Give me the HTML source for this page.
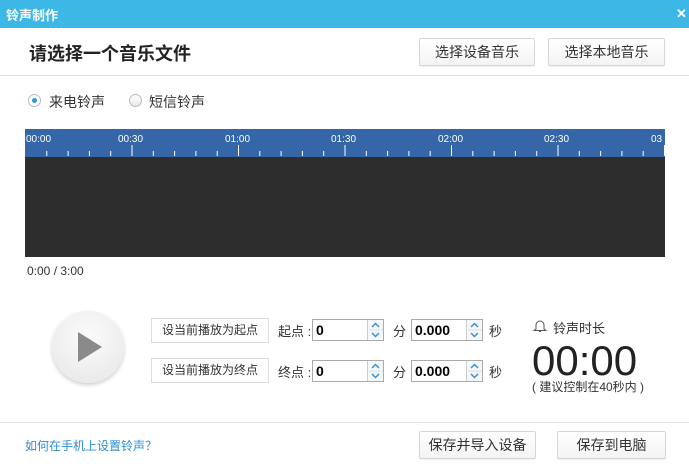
<!DOCTYPE html>
<html><head><meta charset="utf-8"><style>
*{margin:0;padding:0;box-sizing:border-box}
body{width:689px;height:466px;background:#fff;font-family:"Liberation Sans","Noto Sans CJK SC",sans-serif;position:relative;overflow:hidden;color:#333}
.a{position:absolute}
.btn{position:absolute;border:1px solid #d6d6d6;border-radius:2px;background:linear-gradient(#fff,#f4f4f4);font-size:14px;color:#333;text-align:center;box-shadow:0 1px 1px rgba(0,0,0,.06)}
.sb{position:absolute;border:1px solid #ddd;background:#fff;font-size:12px;text-align:center;line-height:22px;color:#333}
.inp{position:absolute;border:1px solid #aaa;background:#fff;font-size:14px;font-weight:bold;color:#000;padding-left:3px;line-height:20px;font-family:"Liberation Sans Narrow","Liberation Sans",sans-serif}
.sp{position:absolute;width:16px;height:20px;border-left:1px solid #ccc;right:0;top:0;background:#f4f8fb}
.lbl{position:absolute;font-size:13px;color:#333}
</style></head><body>
<div class="a" style="left:0;top:0;width:689px;height:28px;background:#3db8e6"></div>
<div class="a" style="left:6px;top:5px;font-size:13px;color:#fff;font-weight:bold">铃声制作</div>
<div class="a" style="left:676px;top:6px;font-size:13px;color:#fff;font-weight:bold">✕</div>
<div class="a" style="left:29px;top:40px;font-size:18px;color:#222;font-weight:bold">请选择一个音乐文件</div>
<div class="btn" style="left:419px;top:38px;width:116px;height:28px;line-height:26px">选择设备音乐</div>
<div class="btn" style="left:548px;top:38px;width:117px;height:28px;line-height:26px">选择本地音乐</div>
<div class="a" style="left:0;top:75px;width:689px;height:1px;background:#e3e3e3"></div>
<div class="a" style="left:28px;top:94px;width:13px;height:13px;border-radius:50%;border:1px solid #bbb;background:#fff"><div class="a" style="left:3px;top:3px;width:5px;height:5px;border-radius:50%;background:#2a9be0"></div></div>
<div class="a" style="left:49px;top:92px;font-size:14px">来电铃声</div>
<div class="a" style="left:129px;top:94px;width:13px;height:13px;border-radius:50%;border:1px solid #bbb;background:linear-gradient(#fff,#e8e8e8)"></div>
<div class="a" style="left:149px;top:92px;font-size:14px">短信铃声</div>
<div class="a" style="left:25px;top:129px;width:640px;height:28px;background:#3566a8;overflow:hidden">
<svg width="640" height="28" style="position:absolute;left:0;top:0">
<g fill="#fff" font-size="10" font-family="Liberation Sans Narrow,Liberation Sans,sans-serif">
<text x="1" y="13">00:00</text><text x="93" y="13">00:30</text><text x="200" y="13">01:00</text><text x="306" y="13">01:30</text><text x="413" y="13">02:00</text><text x="519" y="13">02:30</text><text x="626" y="13">03</text></g>
<g stroke="#fff" stroke-width="1">
<path d="M21.8 22v5M43.1 22v5M64.4 22v5M85.7 22v5M107 16v11M128.3 22v5M149.6 22v5M170.9 22v5M192.2 22v5M213.5 16v11M234.8 22v5M256.1 22v5M277.4 22v5M298.7 22v5M320 16v11M341.3 22v5M362.6 22v5M383.9 22v5M405.2 22v5M426.5 16v11M447.8 22v5M469.1 22v5M490.4 22v5M511.7 22v5M533 16v11M554.3 22v5M575.6 22v5M596.9 22v5M618.2 22v5M639.5 16v11"/></g></svg></div>
<div class="a" style="left:25px;top:157px;width:640px;height:100px;background:#2d2d2d"></div>
<div class="a" style="left:27px;top:264px;font-size:12px;color:#333">0:00 / 3:00</div>
<div class="a" style="left:52px;top:311px;width:72px;height:72px;border-radius:50%;background:radial-gradient(circle at 50% 35%,#fbfbfb,#e6e6e6);box-shadow:0 2px 4px rgba(0,0,0,.2)"></div>
<svg class="a" style="left:78px;top:332px" width="26" height="30"><path d="M0 0L24 15L0 30Z" fill="#8a8a8a"/></svg>
<div class="sb" style="left:151px;top:318px;width:118px;height:25px">设当前播放为起点</div>
<div class="sb" style="left:151px;top:358px;width:118px;height:25px">设当前播放为终点</div>
<div class="lbl" style="left:278px;top:321px">起点 :</div>
<div class="lbl" style="left:278px;top:362px">终点 :</div>
<div class="inp" style="left:312px;top:319px;width:72px;height:22px">0<div class="sp"><svg width="15" height="20"><path d="M4 7L7.5 3.5L11 7M4 13L7.5 16.5L11 13" fill="none" stroke="#3b8ed0" stroke-width="1.5"/><path d="M1 10h14" stroke="#dde" stroke-width="1"/></svg></div></div>
<div class="inp" style="left:312px;top:360px;width:72px;height:22px">0<div class="sp"><svg width="15" height="20"><path d="M4 7L7.5 3.5L11 7M4 13L7.5 16.5L11 13" fill="none" stroke="#3b8ed0" stroke-width="1.5"/><path d="M1 10h14" stroke="#dde" stroke-width="1"/></svg></div></div>
<div class="lbl" style="left:393px;top:321px">分</div>
<div class="lbl" style="left:393px;top:362px">分</div>
<div class="inp" style="left:411px;top:319px;width:72px;height:22px">0.000<div class="sp"><svg width="15" height="20"><path d="M4 7L7.5 3.5L11 7M4 13L7.5 16.5L11 13" fill="none" stroke="#3b8ed0" stroke-width="1.5"/><path d="M1 10h14" stroke="#dde" stroke-width="1"/></svg></div></div>
<div class="inp" style="left:411px;top:360px;width:72px;height:22px">0.000<div class="sp"><svg width="15" height="20"><path d="M4 7L7.5 3.5L11 7M4 13L7.5 16.5L11 13" fill="none" stroke="#3b8ed0" stroke-width="1.5"/><path d="M1 10h14" stroke="#dde" stroke-width="1"/></svg></div></div>
<div class="lbl" style="left:489px;top:321px">秒</div>
<div class="lbl" style="left:489px;top:362px">秒</div>
<svg class="a" style="left:533px;top:318px" width="14" height="15"><path d="M3 11V7a4 4 0 0 1 8 0v4l2 1.5H1Z M6 13.5h2" fill="none" stroke="#555" stroke-width="1"/></svg>
<div class="a" style="left:553px;top:318px;font-size:13px;color:#333">铃声时长</div>
<div class="a" style="left:532px;top:338px;font-size:42px;color:#222;line-height:46px;font-family:'Liberation Sans Narrow','Liberation Sans',sans-serif">00:00</div>
<div class="a" style="left:532px;top:378px;font-size:12px;color:#333">( 建议控制在40秒内 )</div>
<div class="a" style="left:0;top:422px;width:689px;height:1px;background:#e3e3e3"></div>
<div class="a" style="left:25px;top:437px;font-size:12px;color:#2a8fd0">如何在手机上设置铃声？</div>
<div class="btn" style="left:419px;top:431px;width:117px;height:28px;line-height:26px">保存并导入设备</div>
<div class="btn" style="left:557px;top:431px;width:109px;height:28px;line-height:26px">保存到电脑</div>
</body></html>
